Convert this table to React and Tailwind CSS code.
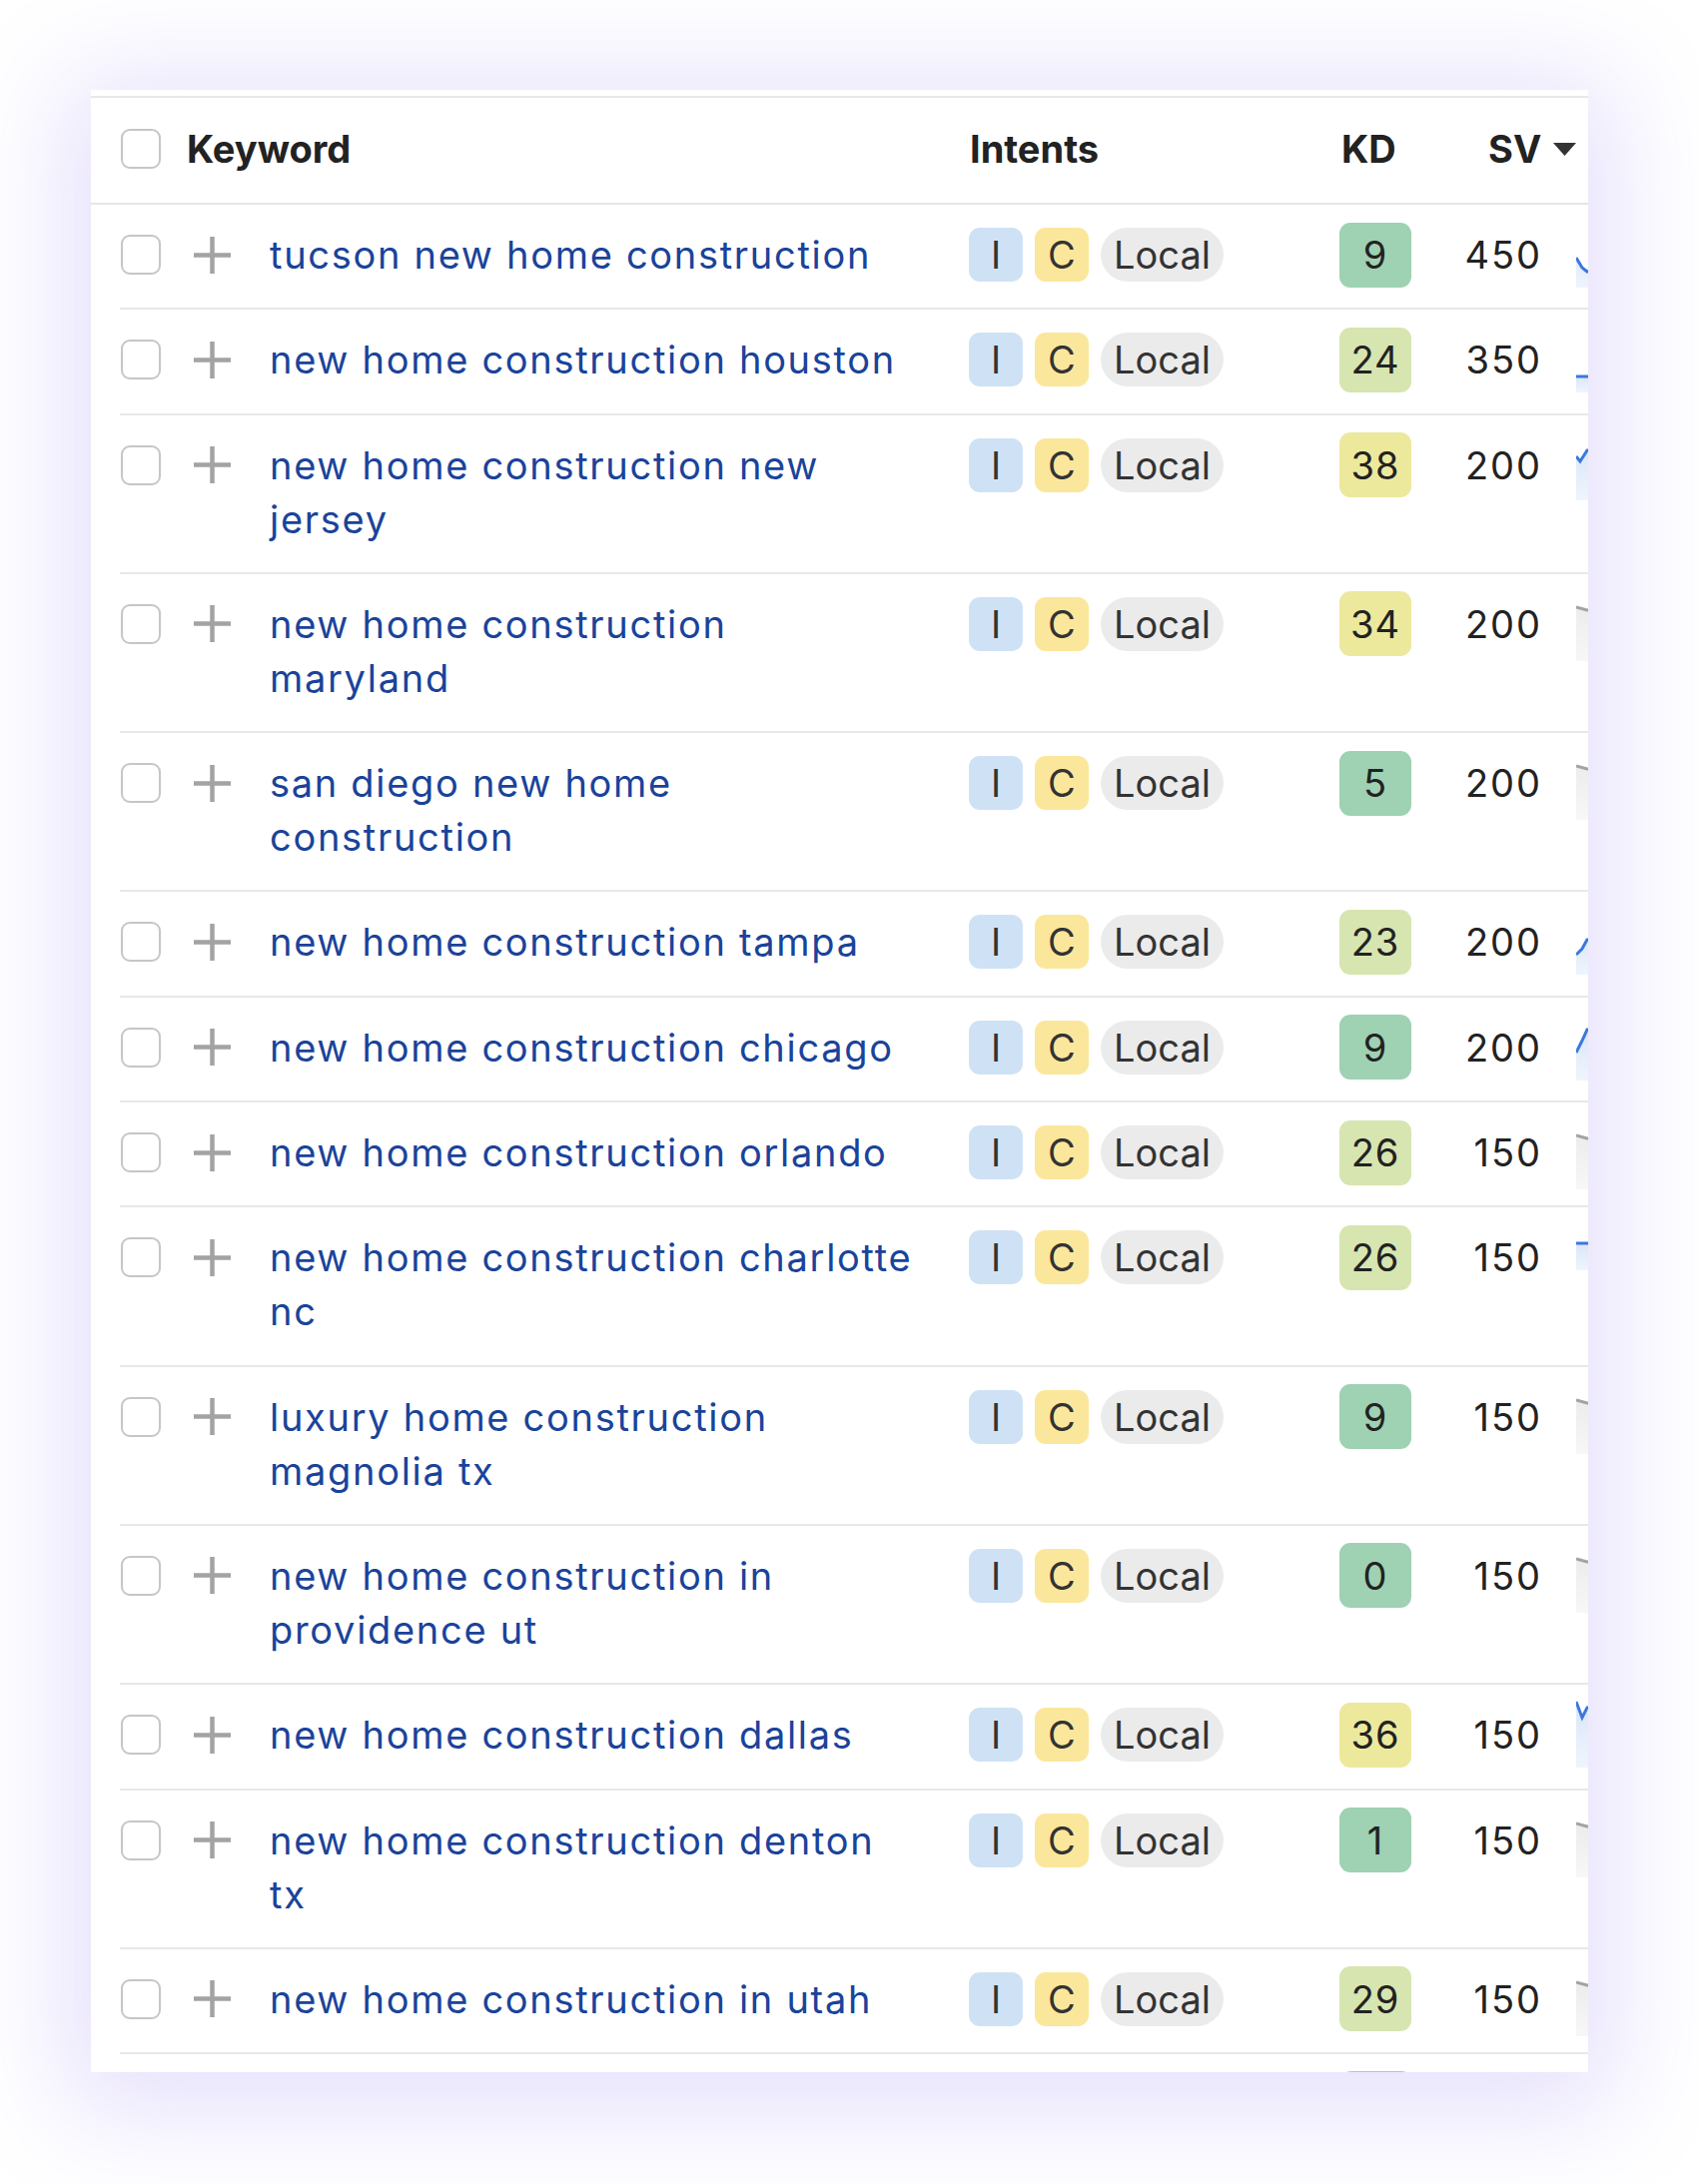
import React from 'react';

const rows = [
  { kw: ['tucson new home construction'], kd: 9, sv: 450, trend: 'blue', line: '0,50 6,60 11,64 100,40', bottom: 80 },
  { kw: ['new home construction houston'], kd: 24, sv: 350, trend: 'blue', line: '0,64 100,64', bottom: 80 },
  { kw: ['new home construction new', 'jersey'], kd: 38, sv: 200, trend: 'blue', line: '0,38 4,43 11,32 100,30', bottom: 82 },
  { kw: ['new home construction', 'maryland'], kd: 34, sv: 200, trend: 'gray', line: '0,30 11,33 100,40', bottom: 84 },
  { kw: ['san diego new home', 'construction'], kd: 5, sv: 200, trend: 'gray', line: '0,30 11,33 100,40', bottom: 84 },
  { kw: ['new home construction tampa'], kd: 23, sv: 200, trend: 'blue', line: '0,60 6,54 11,45 100,40', bottom: 80 },
  { kw: ['new home construction chicago'], kd: 9, sv: 200, trend: 'blue', line: '0,52 6,40 11,29 100,30', bottom: 80 },
  { kw: ['new home construction orlando'], kd: 26, sv: 150, trend: 'gray', line: '0,30 11,33 100,40', bottom: 84 },
  { kw: ['new home construction charlotte', 'nc'], kd: 26, sv: 150, trend: 'blue', line: '0,33 100,33', bottom: 60 },
  { kw: ['luxury home construction', 'magnolia tx'], kd: 9, sv: 150, trend: 'gray', line: '0,30 11,33 100,40', bottom: 84 },
  { kw: ['new home construction in', 'providence ut'], kd: 0, sv: 150, trend: 'gray', line: '0,30 11,33 100,40', bottom: 84 },
  { kw: ['new home construction dallas'], kd: 36, sv: 150, trend: 'blue', line: '0,14 6,30 11,20 100,30', bottom: 80 },
  { kw: ['new home construction denton', 'tx'], kd: 1, sv: 150, trend: 'gray', line: '0,30 11,33 100,40', bottom: 84 },
  { kw: ['new home construction in utah'], kd: 29, sv: 150, trend: 'gray', line: '0,30 11,33 100,40', bottom: 84 },
];

// KD badge colour by difficulty
const kdColor = (kd) => {
  if (kd < 15) return 'bg-[#9fd1b3]';
  if (kd < 30) return 'bg-[#d7e5b0]';
  return 'bg-[#ece99d]';
};

const Checkbox = () => (
  <div className="w-[40px] h-[40px] shrink-0 rounded-[9px] border-[2.5px] border-[#c6c6c6] bg-white" />
);

const PlusIcon = () => (
  <svg width="37" height="37" viewBox="0 0 37 37">
    <rect x="0" y="16.25" width="37" height="4.5" fill="#a3a3a3" />
    <rect x="16.25" y="0" width="4.5" height="37" fill="#a3a3a3" />
  </svg>
);

const Sparkline = ({ trend, line, bottom, id }) => {
  const blue = trend === 'blue';
  const stroke = blue ? '#3b78dc' : '#a3a3a3';
  const fill = blue ? '#d9e6f8' : '#ececec';
  const area = `${line} 100,${bottom} 0,${bottom}`;
  return (
    <svg width="100" height="90" viewBox="0 0 100 90" className="-mt-[20px]">
      <defs>
        <linearGradient id={`g${id}`} x1="0" y1="0" x2="0" y2="1">
          <stop offset="0" stopColor={fill} stopOpacity="1" />
          <stop offset="1" stopColor={fill} stopOpacity="0.4" />
        </linearGradient>
      </defs>
      <polygon points={area} fill={`url(#g${id})`} />
      <polyline points={line} fill="none" stroke={stroke} strokeWidth="3" />
    </svg>
  );
};

const Row = ({ row, idx }) => (
  <div className="ml-[29px] flex items-start border-b-2 border-[#e8e8e8] pt-[23px] pb-[26.3px]">
    <div className="pl-[1px] h-[54px] flex items-center">
      <Checkbox />
    </div>
    <div className="ml-[33px] h-[54px] flex items-center shrink-0">
      <PlusIcon />
    </div>
    <div className="ml-[39px] w-[700px] shrink-0 text-[#1a439a] tracking-[1.7px]">
      {row.kw.map((line) => (
        <div key={line} className="whitespace-nowrap">{line}</div>
      ))}
    </div>
    <div className="w-[371px] shrink-0 flex gap-[12px] text-[#333]">
      <span className="w-[54px] h-[54px] rounded-[11px] bg-[#cfe2f5] flex items-center justify-center">I</span>
      <span className="w-[54px] h-[54px] rounded-[11px] bg-[#fbe79c] flex items-center justify-center">C</span>
      <span className="w-[123px] h-[54px] rounded-full bg-[#ebebeb] flex items-center justify-center">Local</span>
    </div>
    <div className="h-[54px] flex items-center shrink-0">
      <span className={`${kdColor(row.kd)} w-[72px] h-[65px] rounded-[11px] flex items-center justify-center text-[#222] tracking-[1px] shrink-0`}>
        {row.kd}
      </span>
    </div>
    <div className="w-[131px] shrink-0 text-right text-[#222] tracking-[2px]">{row.sv}</div>
    <div className="ml-[34px] h-[54px] shrink-0">
      <Sparkline trend={row.trend} line={row.line} bottom={row.bottom} id={idx} />
    </div>
  </div>
);

const App = () => {
  return (
    <div className="w-[1700px] h-[2187px] bg-white overflow-hidden pt-[90px] pl-[91px]" style={{ fontFamily: 'Inter, "Noto Sans", sans-serif' }}>
      <div className="w-[1499px] h-[1985px] bg-white overflow-hidden shadow-[0_14px_100px_26px_rgba(130,100,240,0.2)] text-[38px] leading-[54px]">
        <div className="mt-[6px] border-t-2 border-[#e8e8e8]" />
        {/* Header */}
        <div className="h-[107px] flex items-center pl-[30px] pb-[3px] border-b-2 border-[#e6e6e6] font-bold text-[#222]">
          <Checkbox />
          <div className="ml-[26px] w-[784px] shrink-0">Keyword</div>
          <div className="w-[372px] shrink-0">Intents</div>
          <div className="w-[147px] shrink-0">KD</div>
          <div className="flex items-center gap-[12px]">
            <span>SV</span>
            <svg width="23" height="13" viewBox="0 0 23 13">
              <polygon points="0,0 23,0 11.5,13" fill="#333" />
            </svg>
          </div>
        </div>
        {/* Rows */}
        {rows.map((row, i) => (
          <Row key={i} row={row} idx={i} />
        ))}
        {/* next row, cut off by the card edge */}
        <div className="ml-[29px] pt-[17px] pl-[1222px]">
          <div className="w-[72px] h-[65px] rounded-[11px] bg-[#9fd1b3]" />
        </div>
      </div>
    </div>
  );
};

export default App;
